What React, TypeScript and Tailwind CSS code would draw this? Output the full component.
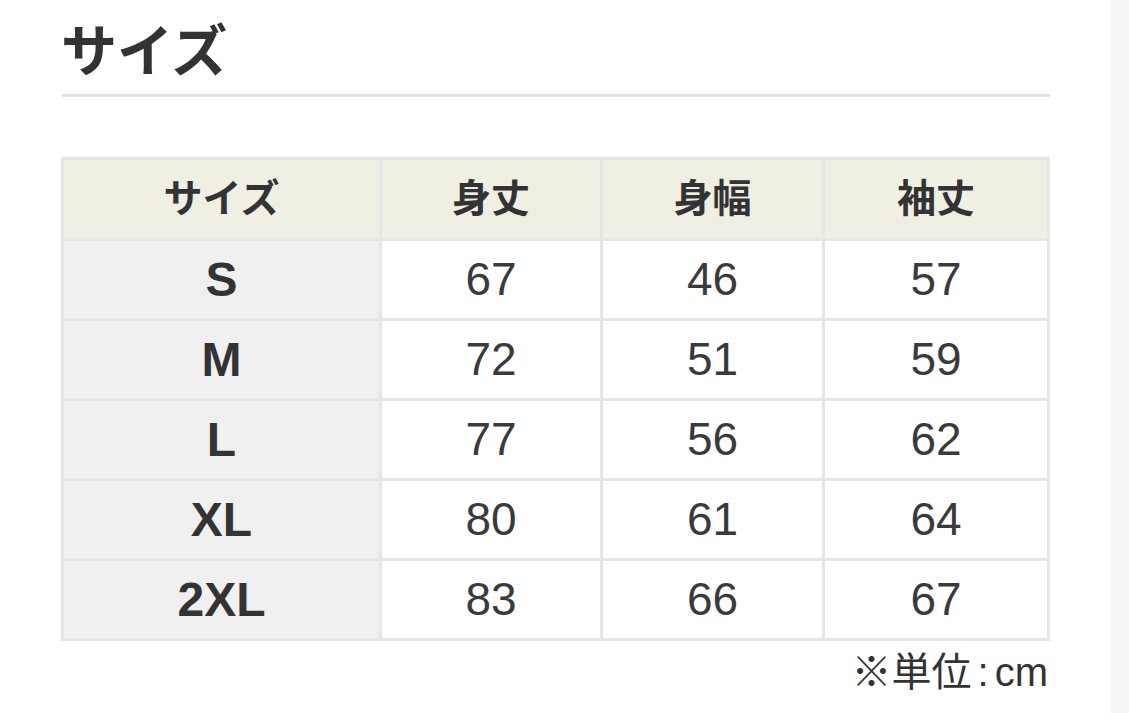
import React from "react";

const rows = [
  ["S", "67", "46", "57"],
  ["M", "72", "51", "59"],
  ["L", "77", "56", "62"],
  ["XL", "80", "61", "64"],
  ["2XL", "83", "66", "67"],
];

const font = { fontFamily: '"Liberation Sans", "Noto Sans CJK JP", sans-serif' };

export default function App() {
  return (
    <div
      className="flex h-[713px] w-full overflow-hidden bg-white text-[#333]"
      style={font}
    >
      <div className="w-[1111px] shrink-0 pl-[61px] pr-[61px] pt-[17px]">
        <h1 className="text-[56px] font-bold leading-[70px]">サイズ</h1>
        <div className="ml-px mt-[7px] h-[3px] w-[988px] bg-[#e2e2e2]" />
        <div className="mt-[60px] grid w-[989px] grid-cols-[315px_218px_219px_222px] gap-[3px] bg-[#e6e6e6] p-[3px]">
          {["サイズ", "身丈", "身幅", "袖丈"].map((h) => (
            <div
              key={h}
              className="flex h-[78px] items-center justify-center bg-[#efefe3] text-[39px] font-bold"
            >
              {h}
            </div>
          ))}
          {rows.map((r) =>
            r.map((c, i) => (
              <div
                key={r[0] + i}
                className={
                  i === 0
                    ? "flex h-[77px] items-center justify-center bg-[#f0f0f0] text-[48px] font-bold"
                    : "flex h-[77px] items-center justify-center bg-white text-[46px] text-[#3a3a3a]"
                }
              >
                {c}
              </div>
            ))
          )}
        </div>
        <div className="mt-[6px] w-[987px] text-right text-[40px] leading-[50px]">
          ※単位<span className="px-[6px]">:</span>cm
        </div>
      </div>
      <div className="flex-1 bg-[#f4f4f4]" />
    </div>
  );
}
